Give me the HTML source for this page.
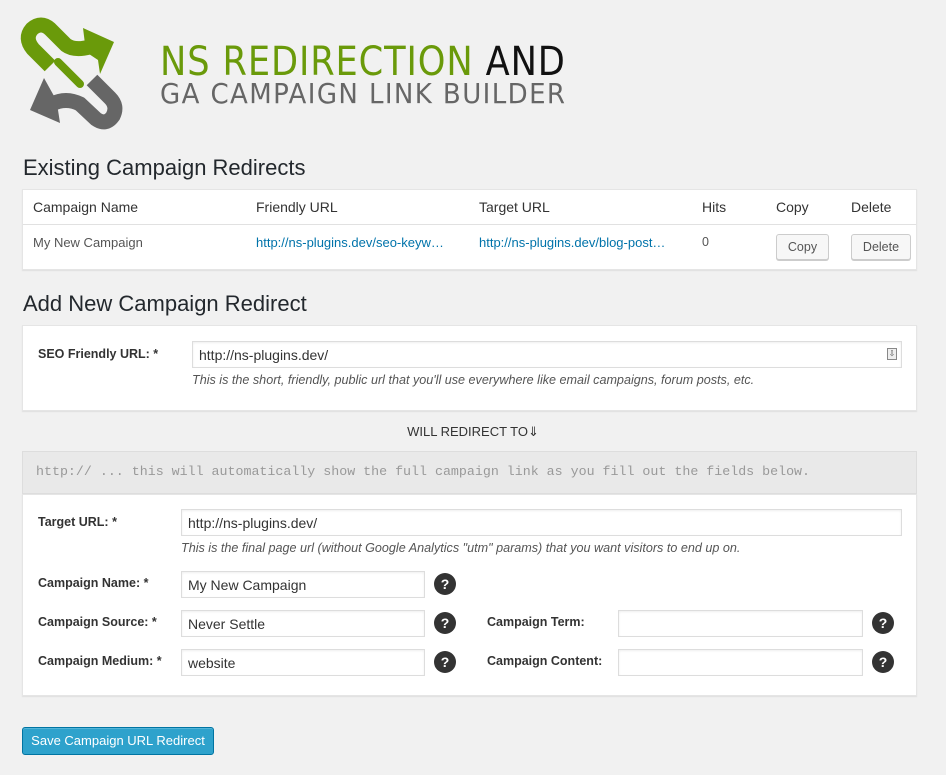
<!DOCTYPE html>
<html><head><meta charset="utf-8"><style>
*{box-sizing:border-box;margin:0;padding:0}
body{width:946px;height:775px;background:#f1f1f1;font-family:"Liberation Sans",sans-serif;color:#444;position:relative;overflow:hidden}
.a{position:absolute;white-space:nowrap}
.box{position:absolute;background:#fff;box-shadow:0 1px 1px rgba(0,0,0,.08);border:1px solid #e5e5e5}
.h2{position:absolute;font-size:22px;color:#23282d;left:23px}
.inp{position:absolute;background:#fff;border:1px solid #ddd;box-shadow:inset 0 1px 2px rgba(0,0,0,.07);height:27px;font-size:14px;color:#333;padding:4px 6px;line-height:18px}
.lbl{position:absolute;font-size:12.5px;font-weight:bold;color:#333}
.q{position:absolute;width:22px;height:22px;border-radius:50%;background:#333;color:#fff;font-weight:bold;font-size:14px;text-align:center;line-height:22px}
.help{position:absolute;font-size:12.6px;font-style:italic;color:#555}
.btn{position:absolute;height:26px;border:1px solid #ccc;border-radius:3px;background:#f7f7f7;font-size:12.5px;color:#555;text-align:center;line-height:24px;box-shadow:0 1px 0 #ccc}
a{color:#0073aa;text-decoration:none}
</style></head><body>
<svg class="a" style="left:0;top:0" width="140" height="135" viewBox="0 0 140 135">
<path d="M50 66 L33 49 Q24 38 32 29 Q41 21 50 29 L66 45 Q74 51 90 47" fill="none" stroke="#6a9a0a" stroke-width="15" stroke-linejoin="round"/>
<path d="M83 28 L114 42 L100 74 L98 60 L86 52 Z" fill="#6a9a0a"/>
<path d="M58 62 L80 84" stroke="#6a9a0a" stroke-width="8" stroke-linecap="round"/>
<path d="M52 104 Q66 97 80 104 L96 119 Q106 126 113 116 Q118 106 110 98 L92 80" fill="none" stroke="#666" stroke-width="15" stroke-linejoin="round"/>
<path d="M44 78 L30 110 L60 123 L58 110 L54 96 Z" fill="#666"/>
</svg>
<div class="a" style="left:160px;top:39px;font-family:'DejaVu Sans',sans-serif;font-size:40px;letter-spacing:1px;line-height:46px;color:#6a9a0a;transform:scaleX(.88);transform-origin:left">NS REDIRECTION <span style="color:#111">AND</span></div>
<div class="a" style="left:160px;top:78px;font-family:'DejaVu Sans',sans-serif;font-size:28px;letter-spacing:1.5px;line-height:32px;color:#666;transform:scaleX(.93);transform-origin:left">GA CAMPAIGN LINK BUILDER</div>

<div class="h2" style="top:155px">Existing Campaign Redirects</div>
<div class="box" style="left:22px;top:189px;width:895px;height:81px">
<div class="a" style="left:0;top:34px;width:893px;border-top:1px solid #e1e1e1"></div>
<div class="a" style="left:10px;top:9px;font-size:14px;color:#333">Campaign Name</div>
<div class="a" style="left:233px;top:9px;font-size:14px;color:#333">Friendly URL</div>
<div class="a" style="left:456px;top:9px;font-size:14px;color:#333">Target URL</div>
<div class="a" style="left:679px;top:9px;font-size:14px;color:#333">Hits</div>
<div class="a" style="left:753px;top:9px;font-size:14px;color:#333">Copy</div>
<div class="a" style="left:828px;top:9px;font-size:14px;color:#333">Delete</div>
<div class="a" style="left:10px;top:45px;font-size:13px;color:#555">My New Campaign</div>
<div class="a" style="left:233px;top:45px;font-size:13px"><a>http://ns-plugins.dev/seo-keyw…</a></div>
<div class="a" style="left:456px;top:45px;font-size:13px"><a>http://ns-plugins.dev/blog-post…</a></div>
<div class="a" style="left:679px;top:45px;font-size:12.5px;color:#555">0</div>
</div>
<div class="btn" style="left:776px;top:234px;width:53px">Copy</div>
<div class="btn" style="left:851px;top:234px;width:60px">Delete</div>

<div class="h2" style="top:291px">Add New Campaign Redirect</div>
<div class="box" style="left:22px;top:325px;width:895px;height:86px"></div>
<div class="lbl" style="left:38px;top:347px">SEO Friendly URL: *</div>
<div class="inp" style="left:192px;top:341px;width:710px">http://ns-plugins.dev/</div>
<div class="a" style="left:887px;top:348px;width:10px;height:12px;border:1px solid #888;background:#eee;font-size:8px;line-height:10px;text-align:center;color:#555">⇩</div>
<div class="help" style="left:192px;top:373px">This is the short, friendly, public url that you'll use everywhere like email campaigns, forum posts, etc.</div>

<div class="a" style="left:0;width:946px;top:424px;text-align:center;font-size:13px;color:#333">WILL REDIRECT TO⇓</div>
<div class="a" style="left:22px;top:451px;width:895px;height:43px;background:#e9e9e9;border:1px solid #ddd"></div>
<div class="a" style="left:36px;top:464px;font-family:'Liberation Mono',monospace;font-size:13.3px;color:#999">http:// ... this will automatically show the full campaign link as you fill out the fields below.</div>

<div class="box" style="left:22px;top:494px;width:895px;height:202px"></div>
<div class="lbl" style="left:38px;top:515px">Target URL: *</div>
<div class="inp" style="left:181px;top:509px;width:721px">http://ns-plugins.dev/</div>
<div class="help" style="left:181px;top:541px">This is the final page url (without Google Analytics "utm" params) that you want visitors to end up on.</div>

<div class="lbl" style="left:38px;top:576px">Campaign Name: *</div>
<div class="inp" style="left:181px;top:571px;width:244px">My New Campaign</div>
<div class="q" style="left:434px;top:573px">?</div>

<div class="lbl" style="left:38px;top:615px">Campaign Source: *</div>
<div class="inp" style="left:181px;top:610px;width:244px">Never Settle</div>
<div class="q" style="left:434px;top:612px">?</div>
<div class="lbl" style="left:487px;top:615px">Campaign Term:</div>
<div class="inp" style="left:618px;top:610px;width:245px"></div>
<div class="q" style="left:872px;top:612px">?</div>

<div class="lbl" style="left:38px;top:654px">Campaign Medium: *</div>
<div class="inp" style="left:181px;top:649px;width:244px">website</div>
<div class="q" style="left:434px;top:651px">?</div>
<div class="lbl" style="left:487px;top:654px">Campaign Content:</div>
<div class="inp" style="left:618px;top:649px;width:245px"></div>
<div class="q" style="left:872px;top:651px">?</div>

<div class="a" style="left:22px;top:727px;width:192px;height:28px;background:#2ea2cc;border:1px solid #0074a2;border-radius:3px;color:#fff;font-size:13px;text-align:center;line-height:26px;box-shadow:inset 0 1px 0 rgba(120,200,230,.5)">Save Campaign URL Redirect</div>
</body></html>
